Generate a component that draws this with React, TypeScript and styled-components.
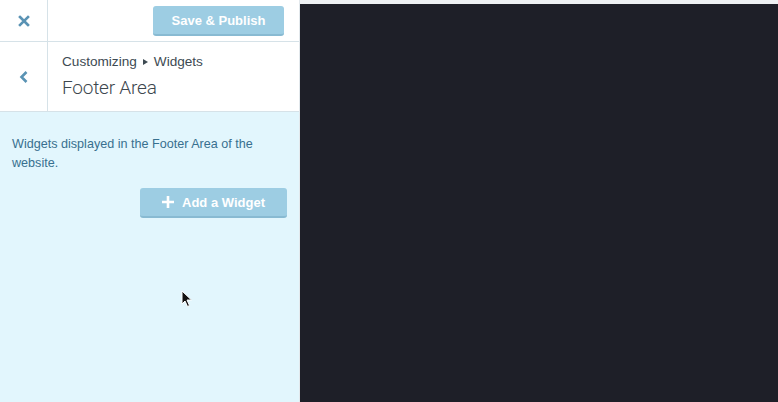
import React from "react"
import styled, { createGlobalStyle } from "styled-components"

const GlobalStyle = createGlobalStyle`
  html, body { margin: 0; padding: 0; height: 100%; }
  body { font-family: "Liberation Sans", Roboto, sans-serif; background: #eef1f3; }
  #root { height: 402px; }
`

const Shell = styled.div`
  display: flex;
  width: 778px;
  height: 402px;
  overflow: hidden;
`

const Sidebar = styled.aside`
  position: relative;
  width: 300px;
  display: flex;
  flex-direction: column;
  background: #fff;
  border-right: 1px solid #e2e8ec;
  box-sizing: border-box;
`

const TopBar = styled.div`
  display: flex;
  height: 42px;
  border-bottom: 1px solid #d6e2e8;
  box-sizing: border-box;
`

const IconCell = styled.div`
  width: 48px;
  display: flex;
  align-items: center;
  justify-content: center;
  border-right: 1px solid #d6e2e8;
  box-sizing: border-box;
  color: #5a93b4;
  flex: none;
`

const TopActions = styled.div`
  flex: 1;
  display: flex;
  justify-content: flex-end;
  align-items: flex-start;
  padding: 6px 15px 0 0;
`

const Button = styled.button<{ $w: number }>`
  width: ${(p) => p.$w}px;
  height: 30px;
  border: none;
  border-bottom: 2px solid #88bad2;
  border-radius: 3px;
  background: #9dcde3;
  color: #fff;
  font-family: "Liberation Sans", Roboto, sans-serif;
  font-weight: bold;
  font-size: 13px;
  display: flex;
  align-items: center;
  justify-content: center;
  gap: 8px;
  padding: 0;
  box-sizing: border-box;
`

const TitleBar = styled.div`
  display: flex;
  height: 70px;
  border-bottom: 1px solid #d6e2e8;
  box-sizing: border-box;
`

const Titles = styled.div`
  padding: 12px 0 0 14px;
  display: flex;
  flex-direction: column;
`

const Crumb = styled.div`
  font-size: 13.6px;
  color: #3d4a52;
  display: flex;
  align-items: center;
  gap: 6px;
`

const Title = styled.h1`
  margin: 7px 0 0;
  font-family: Roboto, sans-serif;
  font-size: 19px;
  font-weight: 300;
  color: #3d474e;
  letter-spacing: -0.2px;
`

const Panel = styled.div`
  flex: 1;
  background: #e2f6fd;
  padding: 23px 12px 0 12px;
  display: flex;
  flex-direction: column;
`

const Description = styled.p`
  margin: 0;
  font-size: 12.6px;
  line-height: 19px;
  color: #38708f;
`

const PanelActions = styled.div`
  display: flex;
  justify-content: flex-end;
  margin-top: 15px;
`

const Preview = styled.main`
  flex: 1;
  display: flex;
  flex-direction: column;
  background: #eef1f3;
`

const Canvas = styled.div`
  flex: 1;
  margin-top: 4px;
  background: #1e1f28;
`

const Cursor = styled.svg`
  position: absolute;
  left: 181px;
  top: 290px;
`

export default function App() {
  return (
    <>
      <GlobalStyle />
      <Shell>
        <Sidebar>
          <TopBar>
            <IconCell>
              <svg width="12" height="12" viewBox="0 0 12 12">
                <path d="M2 2 L10 10 M10 2 L2 10" stroke="currentColor" strokeWidth="2.6" strokeLinecap="square" />
              </svg>
            </IconCell>
            <TopActions>
              <Button $w={131}>Save &amp; Publish</Button>
            </TopActions>
          </TopBar>
          <TitleBar>
            <IconCell>
              <svg width="10" height="14" viewBox="0 0 10 14">
                <path d="M7.5 2 L2.5 7 L7.5 12" fill="none" stroke="currentColor" strokeWidth="2.6" />
              </svg>
            </IconCell>
            <Titles>
              <Crumb>
                Customizing
                <svg width="5" height="6" viewBox="0 0 5 6">
                  <path d="M0 0 L5 3 L0 6 Z" fill="#3d4a52" />
                </svg>
                Widgets
              </Crumb>
              <Title>Footer Area</Title>
            </Titles>
          </TitleBar>
          <Panel>
            <Description>Widgets displayed in the Footer Area of the website.</Description>
            <PanelActions>
              <Button $w={147}>
                <svg width="12" height="12" viewBox="0 0 12 12">
                  <path d="M6 0 V12 M0 6 H12" stroke="#fff" strokeWidth="2.6" />
                </svg>
                Add a Widget
              </Button>
            </PanelActions>
          </Panel>
          <Cursor width="12" height="18" viewBox="0 0 12 18">
            <path d="M1 1 L1 14 L4 11 L6.5 16.5 L8.5 15.5 L6 10 L10.5 10 Z" fill="#111" stroke="#fff" strokeWidth="1" />
          </Cursor>
        </Sidebar>
        <Preview>
          <Canvas />
        </Preview>
      </Shell>
    </>
  )
}
